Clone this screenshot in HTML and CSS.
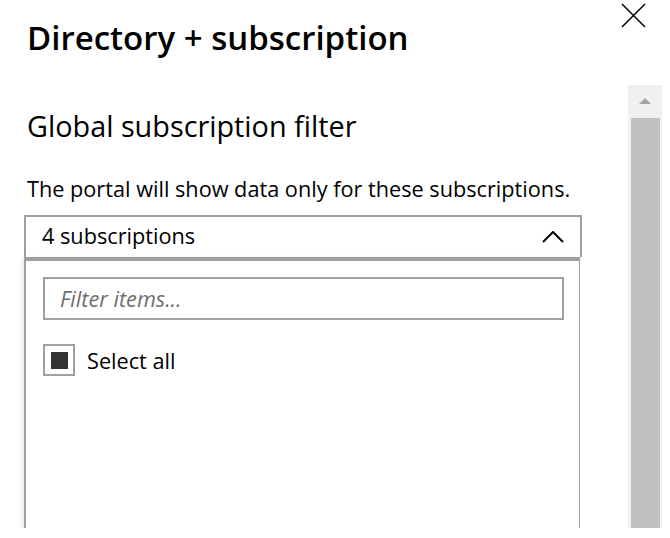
FILE: index.html
```html
<!DOCTYPE html>
<html lang="en">
<head>
    <meta charset="UTF-8">
    <title>Directory + subscription</title>
    <link rel="stylesheet" href="styles.css">
</head>
<body>
    <div class="blade">
        <div class="blade-head">
            <h1 class="blade-title">Directory + subscription</h1>
            <button class="close-btn" aria-label="Close">
                <svg width="25" height="25" viewBox="0 0 25 25"><path d="M1 1 L24 24 M24 1 L1 24" stroke="#000" stroke-width="1.5" fill="none"/></svg>
            </button>
        </div>
        <div class="blade-body">
            <div class="main">
                <h2 class="section-title">Global subscription filter</h2>
                <p class="hint">The portal will show data only for these subscriptions.</p>
                <div class="dropdown">
                    <div class="dropdown-head">
                        <span class="dropdown-value">4 subscriptions</span>
                        <svg class="chevron" width="22" height="12" viewBox="0 0 22 12"><path d="M1 11 L11 1 L21 11" stroke="#000" stroke-width="2" fill="none"/></svg>
                    </div>
                    <div class="dropdown-panel">
                        <div class="filter-box"><span class="placeholder">Filter items...</span></div>
                        <label class="check-row">
                            <span class="checkbox"><span class="check-fill"></span></span>
                            <span>Select all</span>
                        </label>
                    </div>
                </div>
            </div>
            <div class="scrollbar">
                <div class="scroll-up"><span class="arrow"></span></div>
                <div class="scroll-thumb"></div>
            </div>
        </div>
    </div>
</body>
</html>
```

FILE: styles.css
```css
* {
    box-sizing: border-box;
}
body {
    margin: 0;
    background: #fff;
    color: #000;
    font-family: "Open Sans", sans-serif;
}
.blade {
    height: 528px;
    overflow: hidden;
}
.blade-head {
    display: flex;
    justify-content: space-between;
    align-items: flex-start;
}
.blade-title {
    margin: 16px 0 0 27px;
    font-size: 33px;
    font-weight: 600;
    line-height: 44px;
    white-space: nowrap;
}
.close-btn {
    margin: 3px 24px 0 0;
    padding: 0;
    border: 0;
    background: none;
    line-height: 0;
}
.blade-body {
    display: flex;
    height: 443px;
    margin-top: 25px;
}
.main {
    flex: 1;
    padding-left: 24px;
}
.section-title {
    margin: 23px 0 0 3px;
    font-size: 28.8px;
    font-weight: 400;
    line-height: 36px;
    white-space: nowrap;
}
.hint {
    margin: 32px 0 0 3px;
    font-size: 21.7px;
    line-height: 26px;
    white-space: nowrap;
}
.dropdown {
    width: 558px;
    margin-top: 13px;
    height: 400px;
    font-size: 21.7px;
}
.dropdown-head {
    display: flex;
    justify-content: space-between;
    align-items: center;
    height: 42px;
    padding: 0 16px;
    border: 2px solid #a0a0a0;
    border-bottom: 0;
}
.dropdown-value {
    padding-bottom: 3px;
}
.dropdown-panel {
    height: 300px;
    margin-right: 2px;
    padding: 16px 15px 0 17px;
    border-top: 4px solid #a0a0a0;
    border-left: 2px solid #a0a0a0;
    border-right: 1px solid #a0a0a0;
    box-shadow: -3px 0 3px rgba(0, 0, 0, 0.06);
}
.filter-box {
    height: 43px;
    padding: 0 15px;
    border: 2px solid #a0a0a0;
    display: flex;
    align-items: center;
}
.placeholder {
    font-style: italic;
    color: #6e6e6e;
}
.check-row {
    display: flex;
    align-items: center;
    gap: 12px;
    margin-top: 24px;
}
.checkbox {
    width: 32px;
    height: 32px;
    border: 2px solid #a0a0a0;
    display: flex;
    align-items: center;
    justify-content: center;
}
.check-fill {
    width: 17px;
    height: 17px;
    background: #333;
}
.scrollbar {
    width: 34px;
    margin-right: 8px;
    display: flex;
    flex-direction: column;
    background: #f0f0f0;
}
.scroll-up {
    height: 32px;
    display: flex;
    align-items: center;
    justify-content: center;
}
.arrow {
    width: 0;
    height: 0;
    border-left: 6px solid transparent;
    border-right: 6px solid transparent;
    border-bottom: 6px solid #a3a3a3;
}
.scroll-thumb {
    flex: 1;
    margin: 1px 2px 0 3px;
    background: #c1c1c1;
}
```
